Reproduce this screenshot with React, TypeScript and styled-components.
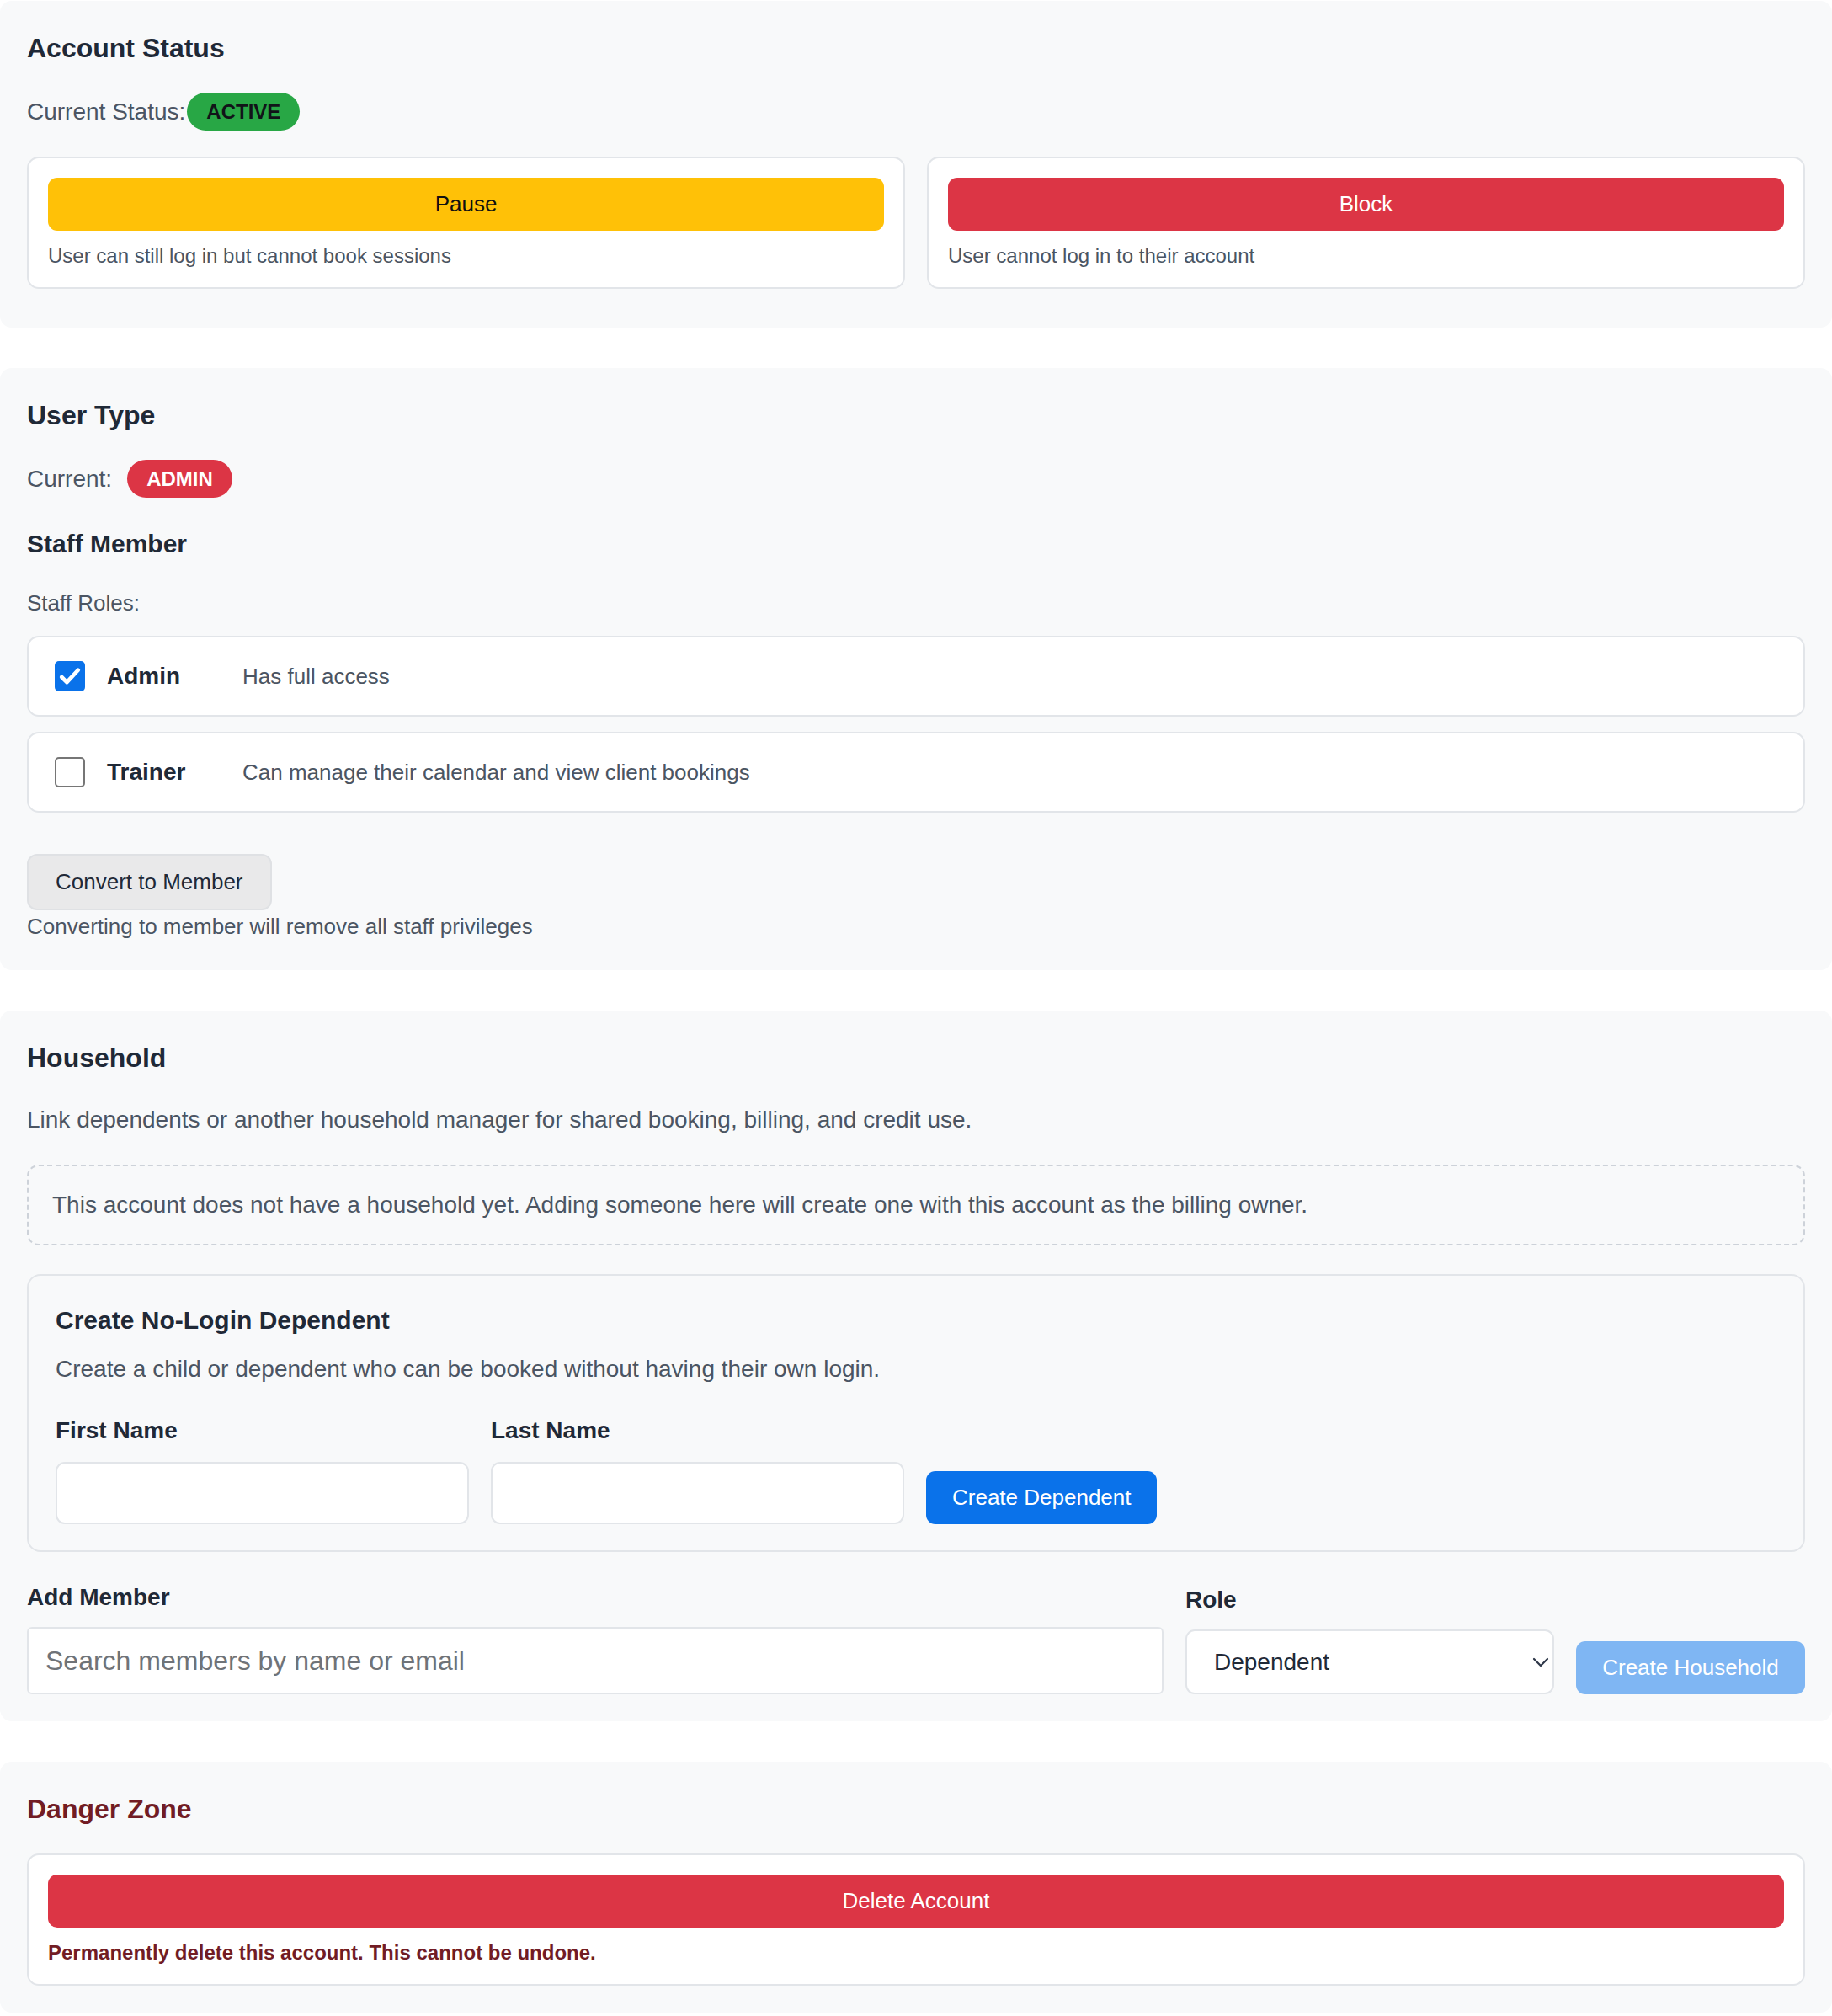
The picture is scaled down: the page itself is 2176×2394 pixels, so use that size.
import React, {FC, useState} from 'react';
import styled, {createGlobalStyle} from 'styled-components';

const GlobalStyle = createGlobalStyle`
  * {
    box-sizing: border-box;
  }
  body {
    margin: 0;
    background: #ffffff;
    font-family: "Liberation Sans", Arial, Helvetica, sans-serif;
    color: #1f2937;
  }
`;

type Role = {
  id: string;
  name: string;
  description: string;
};

const staffRoles: Role[] = [
  {id: 'admin', name: 'Admin', description: 'Has full access'},
  {id: 'trainer', name: 'Trainer', description: 'Can manage their calendar and view client bookings'},
];

const CheckIcon = () => (
  <svg width="30" height="30" viewBox="0 0 24 24" fill="none">
    <path d="M4.2 12.8l4.9 4.9L19.8 6.2" stroke="#fff" strokeWidth="3.8" strokeLinecap="round" strokeLinejoin="round" />
  </svg>
);

const ChevronIcon = () => (
  <svg width="20" height="12" viewBox="0 0 20 12" fill="none">
    <path d="M2 2l8 8 8-8" stroke="#2d3748" strokeWidth="2.2" strokeLinecap="round" strokeLinejoin="round" />
  </svg>
);

const UserSettings: FC = () => {
  const [checked, setChecked] = useState<Record<string, boolean>>({admin: true, trainer: false});
  const [role, setRole] = useState('dependent');

  const toggle = (id: string) => setChecked((prev) => ({...prev, [id]: !prev[id]}));

  return (
    <StyledPage>
      <GlobalStyle />

      <StyledPanel $bottom={46}>
        <StyledTitle>Account Status</StyledTitle>
        <StyledInline $mt={29} $gap={2}>
          <StyledLabelText>Current Status:</StyledLabelText>
          <StyledBadge $tone="success">ACTIVE</StyledBadge>
        </StyledInline>
        <StyledCardGrid>
          <StyledActionCard>
            <StyledFullButton $tone="warning">Pause</StyledFullButton>
            <StyledCardNote>User can still log in but cannot book sessions</StyledCardNote>
          </StyledActionCard>
          <StyledActionCard>
            <StyledFullButton $tone="danger">Block</StyledFullButton>
            <StyledCardNote>User cannot log in to their account</StyledCardNote>
          </StyledActionCard>
        </StyledCardGrid>
      </StyledPanel>

      <StyledPanel>
        <StyledTitle>User Type</StyledTitle>
        <StyledInline $mt={29} $gap={18}>
          <StyledLabelText>Current:</StyledLabelText>
          <StyledBadge $tone="danger">ADMIN</StyledBadge>
        </StyledInline>
        <StyledSubTitle $mt={32}>Staff Member</StyledSubTitle>
        <StyledSmallLabel>Staff Roles:</StyledSmallLabel>
        <StyledRoleList>
          {staffRoles.map((r) => (
            <StyledRoleRow key={r.id} onClick={() => toggle(r.id)}>
              <StyledCheckbox $checked={!!checked[r.id]}>{checked[r.id] && <CheckIcon />}</StyledCheckbox>
              <StyledRoleName>{r.name}</StyledRoleName>
              <StyledRoleDesc>{r.description}</StyledRoleDesc>
            </StyledRoleRow>
          ))}
        </StyledRoleList>
        <StyledGrayButton>Convert to Member</StyledGrayButton>
        <StyledNote>Converting to member will remove all staff privileges</StyledNote>
      </StyledPanel>

      <StyledPanel>
        <StyledTitle>Household</StyledTitle>
        <StyledLead $mt={29}>Link dependents or another household manager for shared booking, billing, and credit use.</StyledLead>
        <StyledEmptyBox>
          This account does not have a household yet. Adding someone here will create one with this account as the billing owner.
        </StyledEmptyBox>

        <StyledSubCard>
          <StyledSubTitle>Create No-Login Dependent</StyledSubTitle>
          <StyledLead $mt={15}>Create a child or dependent who can be booked without having their own login.</StyledLead>
          <StyledFormRow>
            <StyledField>
              <StyledFieldLabel>First Name</StyledFieldLabel>
              <StyledNameInput />
            </StyledField>
            <StyledField>
              <StyledFieldLabel>Last Name</StyledFieldLabel>
              <StyledNameInput />
            </StyledField>
            <StyledPrimaryButton>Create Dependent</StyledPrimaryButton>
          </StyledFormRow>
        </StyledSubCard>

        <StyledMemberRow>
          <StyledField $gap={14}>
            <StyledFieldLabel>Add Member</StyledFieldLabel>
            <StyledSearchInput placeholder="Search members by name or email" />
          </StyledField>
          <StyledField $gap={14}>
            <StyledFieldLabel>Role</StyledFieldLabel>
            <StyledSelectWrap>
              <StyledSelect value={role} onChange={(e) => setRole(e.target.value)}>
                <option value="dependent">Dependent</option>
                <option value="manager">Manager</option>
              </StyledSelect>
              <StyledChevron>
                <ChevronIcon />
              </StyledChevron>
            </StyledSelectWrap>
          </StyledField>
          <StyledPrimaryButton $disabled disabled>
            Create Household
          </StyledPrimaryButton>
        </StyledMemberRow>
      </StyledPanel>

      <StyledPanel>
        <StyledTitle $danger>Danger Zone</StyledTitle>
        <StyledActionCard $mt={29}>
          <StyledFullButton $tone="danger">Delete Account</StyledFullButton>
          <StyledWarning>Permanently delete this account. This cannot be undone.</StyledWarning>
        </StyledActionCard>
      </StyledPanel>
    </StyledPage>
  );
};

const StyledPage = styled.div`
  display: flex;
  flex-direction: column;
  gap: 48px;
  padding-top: 1px;
`;

const StyledPanel = styled.section<{$bottom?: number}>`
  display: flex;
  flex-direction: column;
  background: #f8f9fa;
  border-radius: 14px;
  padding: 32px 32px ${(p) => p.$bottom ?? 32}px;
`;

const StyledTitle = styled.h2<{$danger?: boolean}>`
  margin: 0;
  font-size: 32px;
  line-height: 48px;
  font-weight: 700;
  color: ${(p) => (p.$danger ? '#721c24' : '#1f2937')};
`;

const StyledSubTitle = styled.h3<{$mt?: number}>`
  margin: ${(p) => p.$mt ?? 0}px 0 0;
  font-size: 30px;
  line-height: 45px;
  font-weight: 700;
  color: #1f2937;
`;

const StyledInline = styled.div<{$mt: number; $gap: number}>`
  display: flex;
  align-items: center;
  gap: ${(p) => p.$gap}px;
  margin-top: ${(p) => p.$mt}px;
`;

const StyledLabelText = styled.span`
  font-size: 28px;
  line-height: 42px;
  color: #4b5563;
`;

const StyledBadge = styled.span<{$tone: 'success' | 'danger'}>`
  display: inline-flex;
  align-items: center;
  height: 45px;
  padding: 0 23px;
  border-radius: 999px;
  font-size: 24px;
  font-weight: 700;
  background: ${(p) => (p.$tone === 'success' ? '#28a745' : '#dc3545')};
  color: ${(p) => (p.$tone === 'success' ? '#111418' : '#ffffff')};
`;

const StyledCardGrid = styled.div`
  display: grid;
  grid-template-columns: 1fr 1fr;
  gap: 26px;
  margin-top: 31px;
`;

const StyledActionCard = styled.div<{$mt?: number}>`
  display: flex;
  flex-direction: column;
  background: #ffffff;
  border: 2px solid #e2e5e9;
  border-radius: 14px;
  padding: 23px 23px 19px;
  margin-top: ${(p) => p.$mt ?? 0}px;
`;

const StyledFullButton = styled.button<{$tone: 'warning' | 'danger'}>`
  width: 100%;
  height: 63px;
  border: none;
  border-radius: 11px;
  font-family: inherit;
  font-size: 26px;
  cursor: pointer;
  background: ${(p) => (p.$tone === 'warning' ? '#ffc107' : '#dc3545')};
  color: ${(p) => (p.$tone === 'warning' ? '#111111' : '#ffffff')};
`;

const StyledCardNote = styled.p`
  margin: 12px 0 0;
  font-size: 24px;
  line-height: 36px;
  color: #4b5563;
`;

const StyledWarning = styled.p`
  margin: 12px 0 0;
  font-size: 24px;
  line-height: 36px;
  font-weight: 700;
  color: #721c24;
`;

const StyledSmallLabel = styled.p`
  margin: 29px 0 0;
  font-size: 26px;
  line-height: 39px;
  color: #4b5563;
`;

const StyledRoleList = styled.div`
  display: flex;
  flex-direction: column;
  gap: 18px;
  margin-top: 19px;
`;

const StyledRoleRow = styled.label`
  display: flex;
  align-items: center;
  height: 96px;
  padding: 0 31px;
  background: #ffffff;
  border: 2px solid #e2e5e9;
  border-radius: 14px;
  cursor: pointer;
`;

const StyledCheckbox = styled.span<{$checked: boolean}>`
  display: inline-flex;
  align-items: center;
  justify-content: center;
  width: 36px;
  height: 36px;
  flex-shrink: 0;
  border-radius: 5px;
  background: ${(p) => (p.$checked ? '#0a72ea' : '#ffffff')};
  border: ${(p) => (p.$checked ? 'none' : '2px solid #767676')};
`;

const StyledRoleName = styled.span`
  width: 161px;
  margin-left: 26px;
  font-size: 28px;
  font-weight: 700;
  color: #1f2937;
`;

const StyledRoleDesc = styled.span`
  font-size: 26px;
  color: #4b5563;
`;

const StyledGrayButton = styled.button`
  align-self: flex-start;
  margin-top: 49px;
  padding: 12px 32px;
  border: 2px solid #dfe1e4;
  border-radius: 12px;
  background: #e9e9ea;
  font-family: inherit;
  font-size: 26px;
  line-height: 39px;
  color: #1f2937;
  cursor: pointer;
`;

const StyledNote = styled.p`
  margin: 0;
  font-size: 26px;
  line-height: 39px;
  color: #4b5563;
`;

const StyledLead = styled.p<{$mt: number}>`
  margin: ${(p) => p.$mt}px 0 0;
  font-size: 28px;
  line-height: 42px;
  color: #4b5563;
`;

const StyledEmptyBox = styled.div`
  margin-top: 32px;
  padding: 25px 28px;
  border: 2px dashed #cdd2d9;
  border-radius: 14px;
  font-size: 28px;
  line-height: 42px;
  color: #4b5563;
`;

const StyledSubCard = styled.div`
  margin-top: 34px;
  padding: 30px 32px 31px;
  border: 2px solid #e2e5e9;
  border-radius: 16px;
`;

const StyledFormRow = styled.div`
  display: flex;
  align-items: flex-end;
  gap: 26px;
  margin-top: 31px;
`;

const StyledField = styled.div<{$gap?: number}>`
  display: flex;
  flex-direction: column;
  gap: ${(p) => p.$gap ?? 16}px;
  min-width: 0;
`;

const StyledFieldLabel = styled.label`
  font-size: 28px;
  line-height: 42px;
  font-weight: 700;
  color: #1f2937;
`;

const StyledNameInput = styled.input`
  width: 491px;
  height: 74px;
  padding: 0 20px;
  background: #ffffff;
  border: 2px solid #e2e5e9;
  border-radius: 11px;
  font-family: inherit;
  font-size: 28px;
  outline: none;
`;

const StyledPrimaryButton = styled.button<{$disabled?: boolean}>`
  height: 63px;
  padding: 0 31px;
  border: none;
  border-radius: 11px;
  font-family: inherit;
  font-size: 26px;
  white-space: nowrap;
  color: #ffffff;
  background: ${(p) => (p.$disabled ? '#7fb6f3' : '#0a72ea')};
  cursor: ${(p) => (p.$disabled ? 'default' : 'pointer')};
`;

const StyledMemberRow = styled.div`
  display: grid;
  grid-template-columns: 1fr 438px 272px;
  align-items: end;
  gap: 26px;
  margin-top: 33px;
`;

const StyledSearchInput = styled.input`
  width: 100%;
  height: 80px;
  padding: 0 20px;
  background: #ffffff;
  border: 2px solid #e2e5e9;
  border-radius: 6px;
  font-family: inherit;
  font-size: 32px;
  color: #1f2937;
  outline: none;

  &::placeholder {
    color: #6f7378;
  }
`;

const StyledSelectWrap = styled.div`
  position: relative;
`;

const StyledSelect = styled.select`
  width: 100%;
  height: 77px;
  padding: 0 50px 0 32px;
  appearance: none;
  background: #ffffff;
  border: 2px solid #e2e5e9;
  border-radius: 11px;
  font-family: inherit;
  font-size: 28px;
  color: #1f2937;
  outline: none;
`;

const StyledChevron = styled.span`
  position: absolute;
  right: 6px;
  top: 50%;
  transform: translateY(-50%);
  display: flex;
  pointer-events: none;
`;

export default React.memo(UserSettings);
